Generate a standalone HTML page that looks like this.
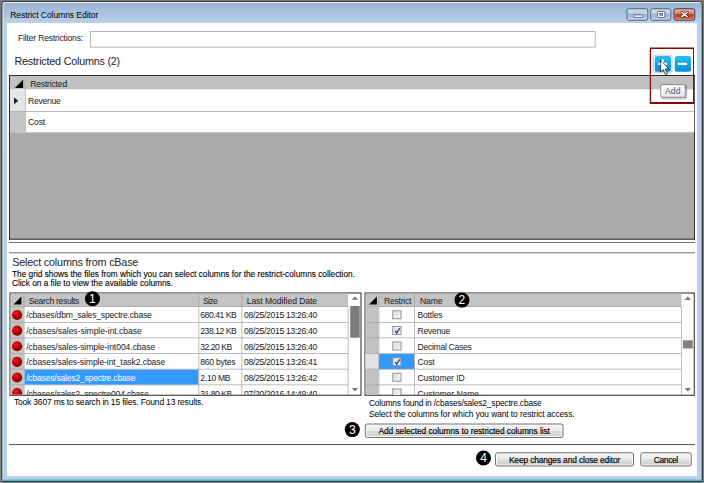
<!DOCTYPE html>
<html lang="en"><head><meta charset="utf-8"><title>Restrict Columns Editor</title>
<style>
html,body{margin:0;padding:0;}
html{width:704px;height:483px;overflow:hidden;}
body{width:704px;height:483px;overflow:hidden;background:linear-gradient(#7a7a7a,#838383);position:relative;font-family:"Liberation Sans", sans-serif;}
.win{position:absolute;left:1.25px;top:1px;width:701.75px;height:481px;box-sizing:border-box;border:1px solid #3d3d3d;border-radius:3.5px 3.5px 1px 1px;
 background:linear-gradient(#9ab4d2 1px,#b9d1ea 21px,#b9d1ea 100%);
 box-shadow:inset 1px 1px 0 #e3ebf5, inset -1px -1.5px 0 #45b9d5;}
.sc{position:absolute;left:0;top:0;width:2816px;height:1932px;transform:scale(0.25);transform-origin:0 0;}
.zm{zoom:4;position:absolute;left:0;top:0;width:704px;height:483px;}
.t{position:absolute;white-space:nowrap;line-height:1;}
</style></head>
<body>
<div class="sc"><div class="zm">
<div class="win"></div>
<div style="position:absolute;left:7.00px;top:23.00px;width:690.00px;height:453.00px;background:#fff;"></div>
<span class="t" id="t0" style="left:10.20px;top:10.72px;font-size:8.6px;color:#000;letter-spacing:-0.100px;">Restrict Columns Editor</span>
<div style="position:absolute;left:626.40px;top:8.20px;width:21.90px;height:12.60px;background:linear-gradient(#cfdcec 0%,#b6cae1 45%,#9db7d5 50%,#a9c2dd 80%,#c1d4e8 100%);border:1px solid #4f6384;border-radius:2.5px;box-sizing:border-box;box-shadow:inset 0 0 0 0.8px rgba(255,255,255,0.45);"><div style="position:absolute;left:6.30px;top:5.20px;width:9.00px;height:3.30px;background:#fff;border:0.75px solid #3f4a63;border-radius:1px;box-sizing:border-box;"></div></div>
<div style="position:absolute;left:650.30px;top:8.20px;width:21.00px;height:12.60px;background:linear-gradient(#cfdcec 0%,#b6cae1 45%,#9db7d5 50%,#a9c2dd 80%,#c1d4e8 100%);border:1px solid #4f6384;border-radius:2.5px;box-sizing:border-box;box-shadow:inset 0 0 0 0.8px rgba(255,255,255,0.45);"><div style="position:absolute;left:5.90px;top:1.90px;width:8.00px;height:6.60px;background:#fff;border:0.75px solid #3f4a63;border-radius:1px;box-sizing:border-box;"></div><div style="position:absolute;left:8.20px;top:4.10px;width:3.40px;height:2.30px;background:#8ea5c4;border:0.7px solid #3f4a63;box-sizing:border-box;"></div></div>
<div style="position:absolute;left:673.50px;top:8.20px;width:21.80px;height:12.60px;background:linear-gradient(#eab0a3 0%,#dc7a64 45%,#c63a1f 50%,#cf5236 80%,#dd8266 100%);border:1px solid #4d2a36;border-radius:2.5px;box-sizing:border-box;box-shadow:inset 0 0 0 0.8px rgba(255,255,255,0.45);"><svg style="position:absolute;left:5.6px;top:1.8px" width="9" height="7" viewBox="0 0 9 7"><path d="M1.9 1.5 L7.1 5.5 M7.1 1.5 L1.9 5.5" stroke="#47262c" stroke-width="2.7" stroke-linecap="square"/><path d="M1.9 1.5 L7.1 5.5 M7.1 1.5 L1.9 5.5" stroke="#fff" stroke-width="1.5" stroke-linecap="square"/></svg></div>
<span class="t" id="t1" style="left:18.00px;top:33.72px;font-size:8.6px;color:#1a1a1a;letter-spacing:-0.190px;">Filter Restrictions:</span>
<div style="position:absolute;left:90.00px;top:31.25px;width:505.50px;height:16.25px;border:0.75px solid #9c9c9c;box-sizing:border-box;background:#fff;"></div>
<span class="t" id="t2" style="left:14.50px;top:56.06px;font-size:10.8px;color:#1e1e1e;letter-spacing:-0.223px;">Restricted Columns (2)</span>
<div style="position:absolute;left:9.00px;top:75.00px;width:686.00px;height:164.90px;background:#ababab;border:1px solid #2e2e2e;box-sizing:border-box;border-bottom:1.5px solid #5c5c5c;"></div>
<div style="position:absolute;left:10.00px;top:76.00px;width:684.30px;height:13.20px;background:#c1c1c1;"></div>
<div style="position:absolute;left:25.00px;top:76.00px;width:0.80px;height:13.20px;background:#b0b0b0;"></div>
<div style="position:absolute;left:10.00px;top:89.20px;width:684.30px;height:43.00px;background:#fff;"></div>
<div style="position:absolute;left:10.00px;top:89.20px;width:15.30px;height:21.80px;background:#e5e5e5;"></div>
<div style="position:absolute;left:10.00px;top:111.80px;width:15.30px;height:20.40px;background:#c4c4c4;"></div>
<div style="position:absolute;left:25.20px;top:89.20px;width:0.80px;height:43.00px;background:#b4b4b4;"></div>
<div style="position:absolute;left:10.00px;top:110.90px;width:684.30px;height:0.90px;background:#a3a3a3;"></div>
<svg style="position:absolute;left:0;top:0" width="704" height="483"><polygon points="14.9,87.9 23.1,87.9 23.1,79.8" fill="#000"/><polygon points="14,97.4 14,104.2 18.3,100.8" fill="#222"/></svg>
<span class="t" id="t3" style="left:30.20px;top:79.22px;font-size:8.6px;color:#1a1a1a;letter-spacing:-0.190px;">Restricted</span>
<span class="t" id="t4" style="left:28.00px;top:96.72px;font-size:8.6px;color:#1a1a1a;letter-spacing:-0.274px;">Revenue</span>
<span class="t" id="t5" style="left:28.00px;top:117.72px;font-size:8.6px;color:#1a1a1a;letter-spacing:-0.170px;">Cost</span>
<div style="position:absolute;left:652.90px;top:54.80px;width:19.50px;height:18.10px;border:0.75px solid #bdbdbd;border-radius:3px;box-sizing:border-box;background:#fafafa;"></div>
<div style="position:absolute;left:654.70px;top:56.00px;width:16.20px;height:15.80px;background:linear-gradient(#2bbcf2,#16a5e6 50%,#0a8bd8);border-radius:2.5px;"></div>
<div style="position:absolute;left:674.80px;top:56.00px;width:16.20px;height:15.80px;background:linear-gradient(#2bbcf2,#16a5e6 50%,#0a8bd8);border-radius:2.5px;"></div>
<div style="position:absolute;left:658.40px;top:62.70px;width:8.70px;height:2.40px;background:#fff;"></div>
<div style="position:absolute;left:661.50px;top:59.40px;width:2.50px;height:9.20px;background:#fff;"></div>
<div style="position:absolute;left:678.10px;top:62.70px;width:8.80px;height:2.40px;background:#fff;"></div>
<div style="position:absolute;left:649.85px;top:47.60px;width:44.10px;height:56.30px;border:solid #8b0505;border-width:1.5px 1.1px 2px 1.25px;box-sizing:border-box;"></div>
<div style="position:absolute;left:660.30px;top:84.30px;width:25.10px;height:13.10px;background:linear-gradient(#fff,#e6e7f1);border:0.75px solid #767676;border-radius:2px;box-sizing:border-box;box-shadow:1.25px 1.25px 1.3px rgba(0,0,0,0.32);"></div>
<span class="t" id="t6" style="left:665.00px;top:86.92px;font-size:8.6px;color:#575757;letter-spacing:0.066px;">Add</span>
<svg style="position:absolute;left:660px;top:59.4px" width="11" height="17" viewBox="0 0 11 17"><path d="M0.6 0.6 L0.6 12.6 L3.3 10.1 L5.6 15.3 L7.4 14.5 L5.2 9.4 L8.9 9.4 Z" fill="#fff" stroke="#1a1a1a" stroke-width="0.75" stroke-linejoin="miter"/></svg>
<div style="position:absolute;left:9.00px;top:242.00px;width:686.00px;height:1.00px;background:#737373;"></div>
<div style="position:absolute;left:9.00px;top:252.20px;width:686.00px;height:1.00px;background:#737373;"></div>
<span class="t" id="t7" style="left:12.20px;top:256.76px;font-size:10.8px;color:#1e1e1e;letter-spacing:-0.193px;">Select columns from cBase</span>
<span class="t" id="t8" style="left:12.00px;top:269.77px;font-size:8.3px;color:#000;letter-spacing:-0.011px;-webkit-text-stroke:0.1px currentColor;">The grid shows the files from which you can select columns for the restrict-columns collection.</span>
<span class="t" id="t9" style="left:12.00px;top:279.17px;font-size:8.3px;color:#000;letter-spacing:-0.019px;-webkit-text-stroke:0.1px currentColor;">Click on a file to view the available columns.</span>
<div style="position:absolute;left:9.50px;top:292.40px;width:352.00px;height:103.30px;background:#fff;border:1px solid #222;box-sizing:border-box;overflow:hidden;"></div>
<div style="position:absolute;left:10.50px;top:293.40px;width:337.50px;height:13.40px;background:#c4c4c4;"></div>
<div style="position:absolute;left:23.60px;top:293.40px;width:0.80px;height:13.40px;background:#a2a2a2;"></div>
<div style="position:absolute;left:198.40px;top:293.40px;width:0.80px;height:13.40px;background:#a2a2a2;"></div>
<div style="position:absolute;left:241.50px;top:293.40px;width:0.80px;height:13.40px;background:#a2a2a2;"></div>
<div style="position:absolute;left:10.50px;top:306.70px;width:13.10px;height:87.60px;background:#c4c4c4;"></div>
<div style="position:absolute;left:24.40px;top:369.58px;width:174.00px;height:15.22px;background:#3399ff;"></div>
<div style="position:absolute;left:23.60px;top:306.70px;width:0.80px;height:88.00px;background:#a6a6a6;"></div>
<div style="position:absolute;left:198.40px;top:306.70px;width:0.80px;height:88.00px;background:#a6a6a6;"></div>
<div style="position:absolute;left:241.50px;top:306.70px;width:0.80px;height:88.00px;background:#a6a6a6;"></div>
<div style="position:absolute;left:347.80px;top:306.70px;width:0.80px;height:88.00px;background:#a6a6a6;"></div>
<div style="position:absolute;left:10.50px;top:306.30px;width:337.50px;height:0.80px;background:#a6a6a6;"></div>
<div style="position:absolute;left:10.50px;top:321.92px;width:337.50px;height:0.80px;background:#a6a6a6;"></div>
<div style="position:absolute;left:10.50px;top:337.54px;width:337.50px;height:0.80px;background:#a6a6a6;"></div>
<div style="position:absolute;left:10.50px;top:353.16px;width:337.50px;height:0.80px;background:#a6a6a6;"></div>
<div style="position:absolute;left:10.50px;top:368.78px;width:337.50px;height:0.80px;background:#a6a6a6;"></div>
<div style="position:absolute;left:10.50px;top:384.40px;width:337.50px;height:0.80px;background:#a6a6a6;"></div>
<div style="position:absolute;left:350.25px;top:306.10px;width:9.60px;height:31.70px;background:#7b7b7b;"></div>
<span class="t" id="t10" style="left:28.70px;top:296.62px;font-size:8.6px;color:#1a1a1a;letter-spacing:-0.332px;">Search results</span>
<span class="t" id="t11" style="left:203.00px;top:296.62px;font-size:8.6px;color:#1a1a1a;letter-spacing:-0.682px;">Size</span>
<span class="t" id="t12" style="left:246.70px;top:296.62px;font-size:8.6px;color:#1a1a1a;letter-spacing:-0.077px;">Last Modified Date</span>
<span class="t" id="t13" style="left:26.20px;top:311.12px;font-size:8.6px;color:#1a1a1a;letter-spacing:-0.207px;">/cbases/dbm_sales_spectre.cbase</span>
<span class="t" id="t14" style="left:200.30px;top:311.12px;font-size:8.6px;color:#1a1a1a;letter-spacing:-0.462px;">680.41 KB</span>
<span class="t" id="t15" style="left:244.00px;top:311.12px;font-size:8.6px;color:#1a1a1a;letter-spacing:-0.310px;">08/25/2015 13:26:40</span>
<span class="t" id="t16" style="left:26.20px;top:326.74px;font-size:8.6px;color:#1a1a1a;letter-spacing:-0.052px;">/cbases/sales-simple-int.cbase</span>
<span class="t" id="t17" style="left:200.30px;top:326.74px;font-size:8.6px;color:#1a1a1a;letter-spacing:-0.462px;">238.12 KB</span>
<span class="t" id="t18" style="left:244.00px;top:326.74px;font-size:8.6px;color:#1a1a1a;letter-spacing:-0.310px;">08/25/2015 13:26:40</span>
<span class="t" id="t19" style="left:26.20px;top:342.36px;font-size:8.6px;color:#1a1a1a;letter-spacing:-0.073px;">/cbases/sales-simple-int004.cbase</span>
<span class="t" id="t20" style="left:200.30px;top:342.36px;font-size:8.6px;color:#1a1a1a;letter-spacing:-0.484px;">32.20 KB</span>
<span class="t" id="t21" style="left:244.00px;top:342.36px;font-size:8.6px;color:#1a1a1a;letter-spacing:-0.310px;">08/25/2015 13:26:40</span>
<span class="t" id="t22" style="left:26.20px;top:357.98px;font-size:8.6px;color:#1a1a1a;letter-spacing:-0.095px;">/cbases/sales-simple-int_task2.cbase</span>
<span class="t" id="t23" style="left:200.30px;top:357.98px;font-size:8.6px;color:#1a1a1a;letter-spacing:-0.254px;">860 bytes</span>
<span class="t" id="t24" style="left:244.00px;top:357.98px;font-size:8.6px;color:#1a1a1a;letter-spacing:-0.310px;">08/25/2015 13:26:41</span>
<span class="t" id="t25" style="left:26.20px;top:373.60px;font-size:8.6px;color:#fff;letter-spacing:-0.221px;">/cbases/sales2_spectre.cbase</span>
<span class="t" id="t26" style="left:200.30px;top:373.60px;font-size:8.6px;color:#1a1a1a;letter-spacing:-0.289px;">2.10 MB</span>
<span class="t" id="t27" style="left:244.00px;top:373.60px;font-size:8.6px;color:#1a1a1a;letter-spacing:-0.310px;">08/25/2015 13:26:42</span>
<span class="t" id="t28" style="left:26.20px;top:389.22px;font-size:8.6px;color:#1a1a1a;letter-spacing:-0.227px;clip-path:inset(0 0 3.02px 0);">/cbases/sales2_spectre004.cbase</span>
<span class="t" id="t29" style="left:200.30px;top:389.22px;font-size:8.6px;color:#1a1a1a;letter-spacing:-0.484px;clip-path:inset(0 0 3.02px 0);">31.80 KB</span>
<span class="t" id="t30" style="left:244.00px;top:389.22px;font-size:8.6px;color:#1a1a1a;letter-spacing:-0.310px;clip-path:inset(0 0 3.02px 0);">07/20/2016 14:49:40</span>
<div style="position:absolute;left:364.60px;top:292.40px;width:330.20px;height:103.30px;background:#fff;border:1px solid #222;box-sizing:border-box;"></div>
<div style="position:absolute;left:365.60px;top:293.40px;width:316.00px;height:13.40px;background:#c4c4c4;"></div>
<div style="position:absolute;left:378.50px;top:293.40px;width:0.80px;height:13.40px;background:#a2a2a2;"></div>
<div style="position:absolute;left:414.20px;top:293.40px;width:0.80px;height:13.40px;background:#a2a2a2;"></div>
<div style="position:absolute;left:365.60px;top:306.70px;width:12.90px;height:88.00px;background:#c2c2c2;"></div>
<div style="position:absolute;left:365.60px;top:353.56px;width:12.90px;height:15.62px;background:#e3e3e3;"></div>
<div style="position:absolute;left:379.10px;top:353.96px;width:35.10px;height:15.22px;background:#3399ff;"></div>
<div style="position:absolute;left:378.50px;top:306.70px;width:0.80px;height:88.00px;background:#a6a6a6;"></div>
<div style="position:absolute;left:414.20px;top:306.70px;width:0.80px;height:88.00px;background:#a6a6a6;"></div>
<div style="position:absolute;left:681.20px;top:306.70px;width:0.80px;height:88.00px;background:#a6a6a6;"></div>
<div style="position:absolute;left:365.60px;top:306.30px;width:316.00px;height:0.80px;background:#a6a6a6;"></div>
<div style="position:absolute;left:365.60px;top:321.92px;width:316.00px;height:0.80px;background:#a6a6a6;"></div>
<div style="position:absolute;left:365.60px;top:337.54px;width:316.00px;height:0.80px;background:#a6a6a6;"></div>
<div style="position:absolute;left:365.60px;top:353.16px;width:316.00px;height:0.80px;background:#a6a6a6;"></div>
<div style="position:absolute;left:365.60px;top:368.78px;width:316.00px;height:0.80px;background:#a6a6a6;"></div>
<div style="position:absolute;left:365.60px;top:384.40px;width:316.00px;height:0.80px;background:#a6a6a6;"></div>
<div style="position:absolute;left:682.90px;top:340.20px;width:9.90px;height:8.40px;background:#808080;"></div>
<span class="t" id="t31" style="left:383.90px;top:296.32px;font-size:8.6px;color:#1a1a1a;letter-spacing:-0.230px;">Restrict</span>
<span class="t" id="t32" style="left:420.00px;top:296.32px;font-size:8.6px;color:#1a1a1a;letter-spacing:-0.109px;">Name</span>
<span class="t" id="t33" style="left:417.50px;top:311.12px;font-size:8.6px;color:#1a1a1a;letter-spacing:-0.212px;">Bottles</span>
<div style="position:absolute;left:392.30px;top:310.30px;width:9.30px;height:9.00px;border:1px solid #8e8f8f;border-bottom-width:1px;box-sizing:border-box;background:linear-gradient(135deg,#d5d9e0,#f6f6f6);box-shadow:inset 0 0 0 1px #f4f4f4;"></div>
<span class="t" id="t34" style="left:417.50px;top:326.74px;font-size:8.6px;color:#1a1a1a;letter-spacing:-0.274px;">Revenue</span>
<div style="position:absolute;left:392.30px;top:325.92px;width:9.30px;height:9.00px;border:1px solid #8e8f8f;border-bottom-width:1px;box-sizing:border-box;background:linear-gradient(135deg,#d5d9e0,#f6f6f6);box-shadow:inset 0 0 0 1px #f4f4f4;"><svg style="position:absolute;left:0.3px;top:0.2px" width="8" height="8" viewBox="0 0 8 8"><path d="M1.5 3.9 L3.2 6.1 L6.3 1.2" stroke="#2b3c9e" stroke-width="1.3" fill="none"/></svg></div>
<span class="t" id="t35" style="left:417.50px;top:342.36px;font-size:8.6px;color:#1a1a1a;letter-spacing:-0.293px;">Decimal Cases</span>
<div style="position:absolute;left:392.30px;top:341.54px;width:9.30px;height:9.00px;border:1px solid #8e8f8f;border-bottom-width:1px;box-sizing:border-box;background:linear-gradient(135deg,#d5d9e0,#f6f6f6);box-shadow:inset 0 0 0 1px #f4f4f4;"></div>
<span class="t" id="t36" style="left:417.50px;top:357.98px;font-size:8.6px;color:#1a1a1a;letter-spacing:-0.170px;">Cost</span>
<div style="position:absolute;left:392.30px;top:357.16px;width:9.30px;height:9.00px;border:1px solid #8e8f8f;border-bottom-width:1px;box-sizing:border-box;background:linear-gradient(135deg,#d5d9e0,#f6f6f6);box-shadow:inset 0 0 0 1px #f4f4f4;"><svg style="position:absolute;left:0.3px;top:0.2px" width="8" height="8" viewBox="0 0 8 8"><path d="M1.5 3.9 L3.2 6.1 L6.3 1.2" stroke="#2b3c9e" stroke-width="1.3" fill="none"/></svg></div>
<span class="t" id="t37" style="left:417.50px;top:373.60px;font-size:8.6px;color:#1a1a1a;letter-spacing:-0.114px;">Customer ID</span>
<div style="position:absolute;left:392.30px;top:372.78px;width:9.30px;height:9.00px;border:1px solid #8e8f8f;border-bottom-width:1px;box-sizing:border-box;background:linear-gradient(135deg,#d5d9e0,#f6f6f6);box-shadow:inset 0 0 0 1px #f4f4f4;"></div>
<span class="t" id="t38" style="left:417.50px;top:389.22px;font-size:8.6px;color:#1a1a1a;letter-spacing:-0.084px;clip-path:inset(0 0 3.02px 0);">Customer Name</span>
<div style="position:absolute;left:392.30px;top:388.40px;width:9.30px;height:6.50px;border:1px solid #8e8f8f;border-bottom-width:0;box-sizing:border-box;background:linear-gradient(135deg,#d5d9e0,#f6f6f6);box-shadow:inset 0 0 0 1px #f4f4f4;"></div>
<svg style="position:absolute;left:0;top:0" width="704" height="483"><polygon points="351.8,299.8 358.2,299.8 355,296.4" fill="#777"/><polygon points="351.8,388 358.2,388 355,391.4" fill="#777"/><polygon points="684.6,300 691,300 687.8,296.6" fill="#777"/><polygon points="684.6,388 691,388 687.8,391.4" fill="#777"/><polygon points="13.5,304.4 21.4,304.4 21.4,296.5" fill="#000"/><polygon points="369,304.4 376.9,304.4 376.9,296.5" fill="#000"/><defs><radialGradient id="rg" cx="0.38" cy="0.32" r="0.7"><stop offset="0" stop-color="#e22222"/><stop offset="0.45" stop-color="#c60505"/><stop offset="1" stop-color="#780000"/></radialGradient></defs><circle cx="17.1" cy="315.01" r="5.1" fill="url(#rg)" clip-path="url(#clipL)"/><circle cx="17.1" cy="330.63" r="5.1" fill="url(#rg)" clip-path="url(#clipL)"/><circle cx="17.1" cy="346.25" r="5.1" fill="url(#rg)" clip-path="url(#clipL)"/><circle cx="17.1" cy="361.87" r="5.1" fill="url(#rg)" clip-path="url(#clipL)"/><circle cx="17.1" cy="377.49" r="5.1" fill="url(#rg)" clip-path="url(#clipL)"/><circle cx="17.1" cy="393.11" r="5.1" fill="url(#rg)" clip-path="url(#clipL)"/><clipPath id="clipL"><rect x="10" y="293" width="351" height="101.4"/></clipPath><circle cx="92.45" cy="298.76" r="7.55" fill="#000"/><circle cx="461.96" cy="300.05" r="7.55" fill="#000"/><circle cx="352.3" cy="429.55" r="7.55" fill="#000"/><circle cx="483.5" cy="458.0" r="7.55" fill="#000"/></svg>
<span class="t" id="t39" style="left:89.10px;top:292.85px;font-size:12px;color:#fff;">1</span>
<span class="t" id="t40" style="left:458.61px;top:294.14px;font-size:12px;color:#fff;">2</span>
<span class="t" id="t41" style="left:348.95px;top:423.64px;font-size:12px;color:#fff;">3</span>
<span class="t" id="t42" style="left:480.15px;top:452.09px;font-size:12px;color:#fff;">4</span>
<span class="t" id="t43" style="left:13.90px;top:397.40px;font-size:8.5px;color:#000;letter-spacing:-0.178px;">Took 3607 ms to search in 15 files. Found 13 results.</span>
<span class="t" id="t44" style="left:368.90px;top:399.19px;font-size:8.4px;color:#000;letter-spacing:-0.169px;">Columns found in /cbases/sales2_spectre.cbase</span>
<span class="t" id="t45" style="left:368.90px;top:409.89px;font-size:8.4px;color:#000;letter-spacing:-0.083px;">Select the columns for which you want to restrict access.</span>
<div style="position:absolute;left:364.80px;top:423.40px;width:198.60px;height:14.50px;border:1px solid #707070;border-radius:2.5px;box-sizing:border-box;background:linear-gradient(#f3f3f3 0%,#ebebeb 48%,#dcdcdc 52%,#cfcfcf 100%);box-shadow:inset 0 0 0 1px rgba(255,255,255,0.8);"></div>
<span class="t" id="t46" style="left:378.40px;top:426.99px;font-size:8.4px;color:#000;letter-spacing:-0.064px;-webkit-text-stroke:0.15px currentColor;">Add selected columns to restricted columns list</span>
<div style="position:absolute;left:9.00px;top:444.00px;width:686.00px;height:1.00px;background:#555;"></div>
<div style="position:absolute;left:494.90px;top:452.20px;width:139.00px;height:14.30px;border:1px solid #707070;border-radius:2.5px;box-sizing:border-box;background:linear-gradient(#f3f3f3 0%,#ebebeb 48%,#dcdcdc 52%,#cfcfcf 100%);box-shadow:inset 0 0 0 1px rgba(255,255,255,0.8);"></div>
<span class="t" id="t47" style="left:508.90px;top:455.59px;font-size:8.4px;color:#000;letter-spacing:-0.137px;-webkit-text-stroke:0.15px currentColor;">Keep changes and close editor</span>
<div style="position:absolute;left:640.20px;top:452.20px;width:51.60px;height:14.30px;border:1px solid #707070;border-radius:2.5px;box-sizing:border-box;background:linear-gradient(#f3f3f3 0%,#ebebeb 48%,#dcdcdc 52%,#cfcfcf 100%);box-shadow:inset 0 0 0 1px rgba(255,255,255,0.8);"></div>
<span class="t" id="t48" style="left:653.80px;top:455.59px;font-size:8.4px;color:#000;letter-spacing:-0.355px;-webkit-text-stroke:0.15px currentColor;">Cancel</span>
</div></div>
</body></html>
